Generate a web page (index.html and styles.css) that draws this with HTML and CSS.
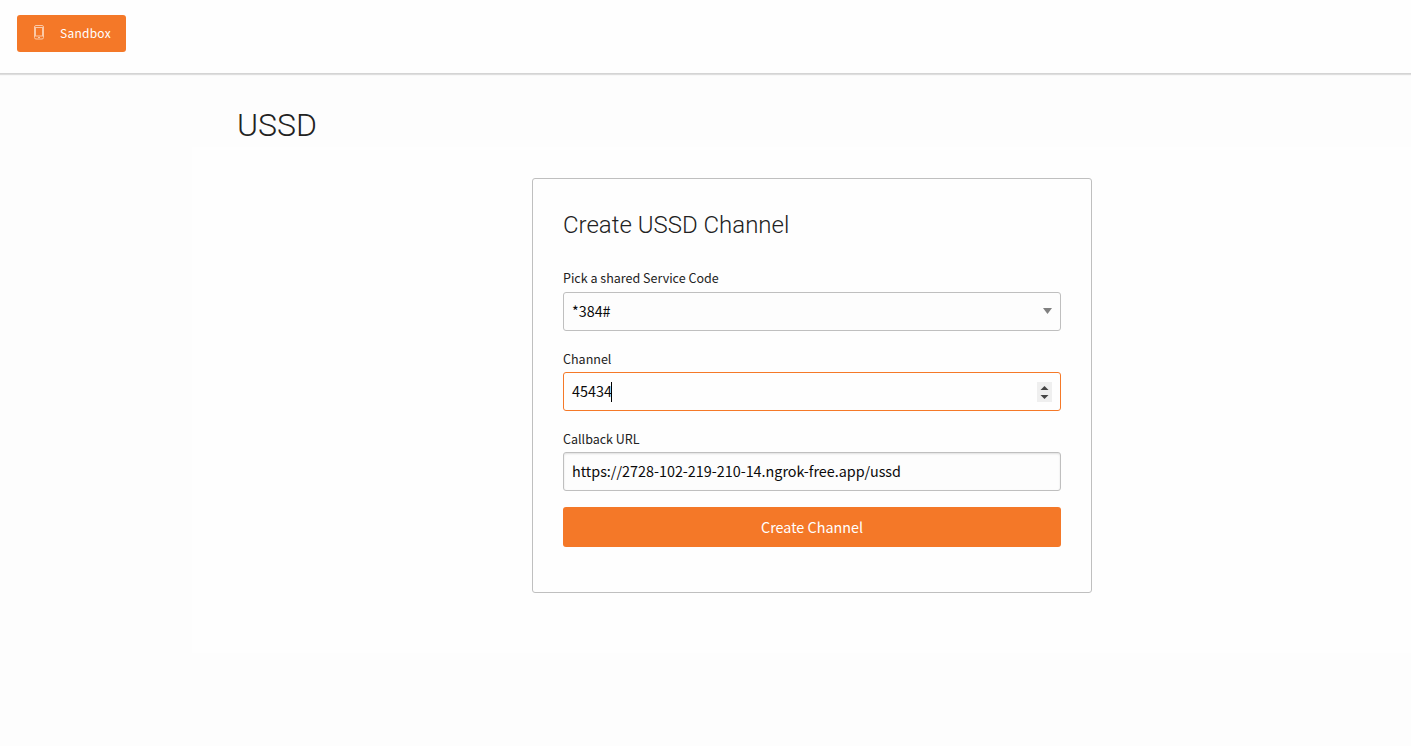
FILE: index.html
```html
<!DOCTYPE html>
<html lang="en">
<head>
<meta charset="utf-8">
<title>USSD</title>
<link rel="stylesheet" href="styles.css">
</head>
<body>
<header class="topbar">
  <a class="sandbox"><svg class="phone" width="10" height="15" viewBox="0 0 10 15"><rect x=".5" y=".5" width="9" height="13.500" rx="1.5"/><path d="M1 2.500h8M1.500 3v8M8.500 3v8M1 11h8M4 12.500h2"/></svg><span class="sandbox-label">Sandbox</span></a>
</header>
<main class="page">
  <h1 class="title">USSD</h1>
  <section class="content">
    <form class="card">
      <h2 class="card-title">Create USSD Channel</h2>
      <div class="field first">
        <label class="label">Pick a shared Service Code</label>
        <div class="control"><span class="value">*384#</span><svg class="arrow" width="9" height="6" viewBox="0 0 9 6"><path d="M0 0h9L4.500 6z"/></svg></div>
      </div>
      <div class="field">
        <label class="label">Channel</label>
        <div class="control focused"><span class="value">45434</span><span class="caret"></span><svg class="spinner" width="15" height="20" viewBox="0 0 15 20"><path d="M3.500 8l4-4 4 4zM3.500 13h8l-4 4z"/></svg></div>
      </div>
      <div class="field">
        <label class="label">Callback URL</label>
        <div class="control inset"><span class="value">https://2728-102-219-210-14.ngrok-free.app/ussd</span></div>
      </div>
      <button class="submit" type="button">Create Channel</button>
    </form>
  </section>
</main>
</body>
</html>
```
FILE: styles.css
```css
* { box-sizing: border-box; }
body {
  margin: 0;
  height: 746px;
  background: #fdfdfd;
  color: #222;
  font-family: "Noto Sans CJK SC", "Noto Sans", sans-serif;
  overflow: hidden;
}
.topbar {
  height: 73px;
  padding: 15px 17px;
  background: #fefefe;
  box-shadow: 0 1px 0 #d4d4d4, 0 2px 1px rgba(0, 0, 0, .12);
}
.sandbox {
  display: flex;
  width: 109px;
  height: 37px;
  padding-left: 17px;
  background: #f47828;
  border-radius: 3px;
  color: #fff;
  font-size: 12px;
  line-height: 35px;
}
.phone {
  margin-top: 10px;
  fill: none;
  stroke: #fbc9a6;
  stroke-width: 1;
}
.sandbox-label { margin-left: 16px; letter-spacing: .25px; }
.page { padding-top: 30px; }
.title {
  margin: 0 0 0 237px;
  height: 44px;
  font: 300 32px/44px Roboto, sans-serif;
}
.content {
  margin-left: 192px;
  height: 506px;
  padding: 31px 0 0 340px;
  background: #fefefe;
}
.card {
  width: 560px;
  height: 415px;
  padding: 29px 30px;
  border: 1px solid #bfbfbf;
  border-radius: 3px;
}
.card-title {
  margin: 0 0 27px;
  font: 300 24px/34px Roboto, sans-serif;
}
.field { height: 80px; }
.first { height: 81px; }
.label {
  display: block;
  height: 22px;
  font-size: 12.53px;
  line-height: 18px;
}
.first .label { height: 23px; }
.control {
  display: flex;
  align-items: center;
  height: 39px;
  padding: 0 8px;
  border: 1px solid #bfbfbf;
  border-radius: 3px;
  background: #fdfdfd;
  color: #0a0a0a;
  font-size: 14.37px;
  line-height: 35px;
}
.value { height: 37px; }
.focused { border-color: #f57928; background: #fefefe; }
.inset { box-shadow: inset 0 1px 2px rgba(10, 10, 10, .12); }
.arrow { margin: -2px 0 0 auto; fill: #808080; }
.caret { width: 1px; height: 20px; margin-left: -1px; background: #000; }
.spinner { margin-left: auto; background: #efefef; fill: #444; }
.submit {
  display: block;
  width: 100%;
  height: 40px;
  margin-top: -3px;
  padding: 0;
  border: 0;
  border-radius: 3px;
  background: #f47828;
  color: #fff;
  font: 14.37px/40px "Noto Sans CJK SC", sans-serif;
}
```
